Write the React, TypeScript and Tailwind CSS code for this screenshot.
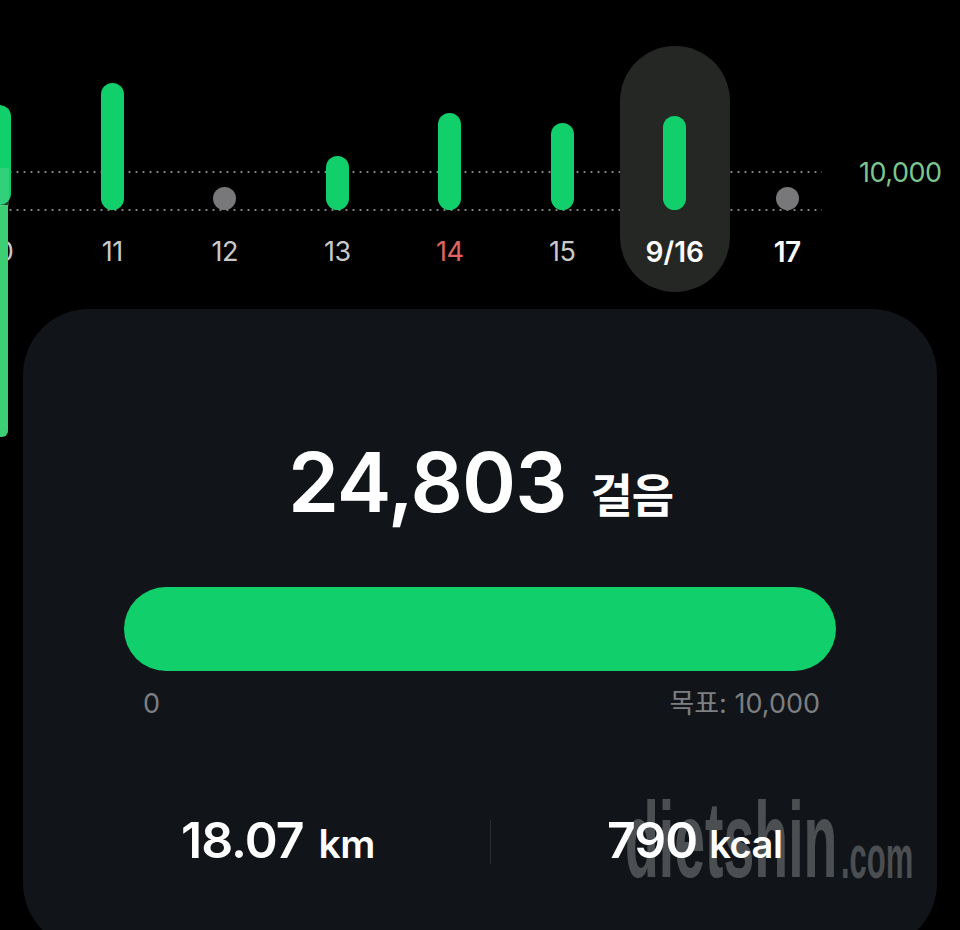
const days = [
  { label: "10", height: 100, bottom: 5, color: "text-[#c9c9c9] text-[27px] tracking-[-0.5px]" },
  { label: "11", height: 127, bottom: 0, color: "text-[#c9c9c9] text-[27px] tracking-[-0.5px]" },
  { label: "12", height: 23, bottom: 0, color: "text-[#c9c9c9] text-[27px] tracking-[-0.5px]", empty: true },
  { label: "13", height: 54, bottom: 0, color: "text-[#c9c9c9] text-[27px] tracking-[-0.5px]" },
  { label: "14", height: 97, bottom: 0, color: "text-[#e0645f] text-[27px] tracking-[-0.5px]" },
  { label: "15", height: 87, bottom: 0, color: "text-[#c9c9c9] text-[27px] tracking-[-0.5px]" },
  { label: "9/16", height: 94, bottom: 0, color: "text-white font-semibold text-[28px]", selected: true },
  { label: "17", height: 23, bottom: 0, color: "text-white font-semibold text-[28px] tracking-[-0.5px]", empty: true },
];

const sans = "font-['Inter','Noto_Sans_CJK_KR',sans-serif]";
const dotted =
  "absolute left-0 h-[2px] w-[822px] bg-[radial-gradient(circle,#858788_1px,transparent_1.2px)] bg-[length:7px_2px]";

const DayColumn = ({ day }: { day: (typeof days)[number] }) => {
  return (
    <div className="relative flex w-[112.5px] shrink-0 flex-col items-center">
      {day.selected && (
        <div className="absolute left-[1px] top-[46px] h-[246px] w-[110px] rounded-full bg-[#252725]" />
      )}
      <div className="relative z-10 flex h-[210px] items-end">
        <div
          className={`w-[23px] rounded-full ${day.empty ? "bg-[#78787a]" : "bg-[#11d06b]"}`}
          style={{ height: day.height, marginBottom: day.bottom }}
        />
      </div>
      <span className={`relative z-10 mt-[24px] leading-[36px] ${day.color}`}>{day.label}</span>
    </div>
  );
};

const App = () => {
  return (
    <div className={`relative h-[930px] w-[960px] overflow-hidden bg-black ${sans}`}>
      {/* chart */}
      <div className="relative h-[309px]">
        <div className={`${dotted} top-[171px]`} />
        <div className={`${dotted} top-[209px]`} />
        <div className="ml-[-56.5px] flex">
          {days.map((day) => (
            <DayColumn key={day.label} day={day} />
          ))}
        </div>
        <span className="absolute left-[859px] top-[155px] text-[27px] leading-[36px] tracking-[-0.5px] text-[#7cc58f]">
          10,000
        </span>
        <div className="absolute left-0 top-[205px] z-20 h-[232px] w-[7.5px] rounded-br-[6px] bg-[#3ccf74]" />
        <div className="absolute left-0 top-[168px] z-20 h-[38px] w-[9px] bg-[#7fcf9f]/30" />
      </div>

      {/* card */}
      <div className="mx-[23px] h-[640px] rounded-[66px] bg-[#111519] px-[101px] pt-[129px]">
        <div className="flex h-[90px] items-baseline justify-center pl-[1px] text-white">
          <span className="text-[82px] font-semibold leading-[90px] tracking-[-1px]">24,803</span>
          <span className="ml-[24px] text-[46px] font-semibold leading-[90px] tracking-[-1px]">걸음</span>
        </div>
        <div className="mt-[59px] h-[84px] rounded-full bg-[#11d06b]" />
        <div className="mt-[15px] flex justify-between px-[19px] text-[27px] leading-[36px] text-[#7d7f81]">
          <span>0</span>
          <span className="mr-[-3px]">목표: 10,000</span>
        </div>
        <div className="mt-[98px] flex h-[44px] items-center">
          <div className="flex w-[366px] items-baseline pl-[57px] text-white">
            <span className="text-[50px] font-semibold leading-[44px] tracking-[-1px]">18.07</span>
            <span className="ml-[15px] text-[39px] font-semibold leading-[44px] tracking-[-0.5px]">km</span>
          </div>
          <div className="h-[44px] w-px bg-[#2c3034]" />
          <div className="flex items-baseline pl-[116px] text-white">
            <span className="text-[50px] font-semibold leading-[44px] tracking-[-1px]">790</span>
            <span className="ml-[12px] text-[38px] font-semibold leading-[44px] tracking-[-0.5px]">kcal</span>
          </div>
        </div>
      </div>

      {/* watermark */}
      <span className="absolute left-[625px] top-[785px] z-30 origin-left scale-x-[0.518] whitespace-nowrap font-['Liberation_Sans',sans-serif] text-[107px] font-bold leading-[110px] text-white/25">
        dietshin
      </span>
      <span className="absolute left-[841px] top-[819px] z-30 origin-left scale-x-[0.5] whitespace-nowrap font-['Liberation_Sans',sans-serif] text-[62px] font-bold leading-[76px] text-white/25">
        .com
      </span>
    </div>
  );
};

export default App;
